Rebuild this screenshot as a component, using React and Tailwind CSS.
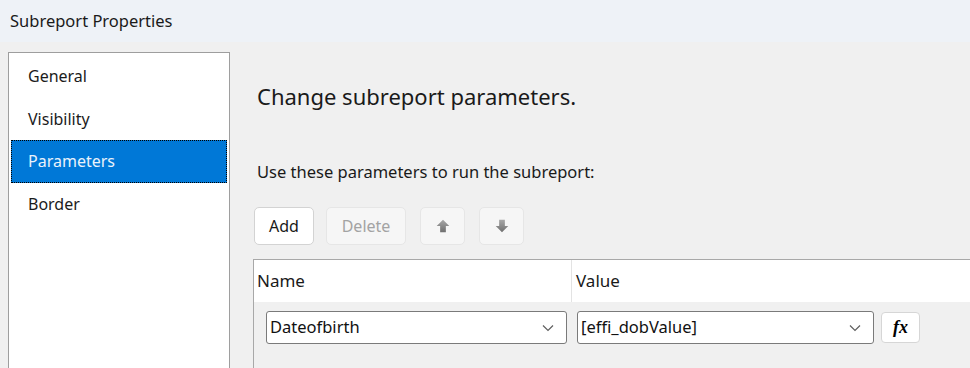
import React from 'react'

const font = { fontFamily: '"Noto Sans", "Open Sans", sans-serif' }

const Chevron = () => (
  <svg width="12" height="8" viewBox="0 0 12 8" className="shrink-0">
    <path d="M1 1.5 L6 6.5 L11 1.5" fill="none" stroke="#5f5f5f" strokeWidth="1.2" />
  </svg>
)

const Arrow = ({ down }) => (
  <svg width="16" height="16" viewBox="0 0 14 14" style={down ? { transform: 'rotate(180deg)' } : undefined}>
    <defs>
      <linearGradient id={down ? 'gd' : 'gu'} x1="0" y1="0" x2="0" y2="1">
        <stop offset="0" stopColor={down ? '#6f6f6f' : '#a8a8a8'} />
        <stop offset="1" stopColor={down ? '#a8a8a8' : '#6f6f6f'} />
      </linearGradient>
    </defs>
    <path d="M7 1.5 L12.5 7 L9.5 7 L9.5 12.5 L4.5 12.5 L4.5 7 L1.5 7 Z" fill={`url(#${down ? 'gd' : 'gu'})`} />
  </svg>
)

const NavItem = ({ label, active }) => (
  <div
    className={`h-[42.5px] flex items-center pl-[17px] text-[16px] ${active ? 'bg-[#0078d7] text-[#eaf2fb] outline-1 outline-dotted outline-black -outline-offset-1' : 'text-[#1b1b1b]'}`}
  >
    {label}
  </div>
)

const Combo = ({ value, width }) => (
  <div className={`${width} h-[33px] bg-white border border-[#7a7a7a] rounded-[3px] flex items-center justify-between pl-[3px] pr-[12px] text-[16.5px] text-[#111]`}>
    <span>{value}</span>
    <Chevron />
  </div>
)

export default function App() {
  return (
    <div className="w-[970px] h-[368px] bg-[#f0f0f0] overflow-hidden flex flex-col" style={font}>
      <div className="h-[42px] shrink-0 bg-[#eef2f7] flex items-center pl-[10px] text-[16.5px] text-[#1a1a1a]">
        Subreport Properties
      </div>

      <div className="flex flex-1 pt-[10px]">
        <div className="ml-[8px] w-[222px] h-[340px] bg-white border border-[#9e9e9e] px-[2px] pt-[2px] shrink-0">
          <NavItem label="General" />
          <NavItem label="Visibility" />
          <NavItem label="Parameters" active />
          <NavItem label="Border" />
        </div>

        <div className="ml-[23px] flex flex-col">
          <div className="mt-[30px] pl-[4px] text-[22px] leading-[29px] text-[#1a1a1a]">Change subreport parameters.</div>
          <div className="mt-[50px] text-[16.5px] leading-[22px] text-[#1a1a1a] pl-[4px]">Use these parameters to run the subreport:</div>

          <div className="mt-[24px] flex items-center gap-[12px] pl-[1px]">
            <div className="w-[60px] h-[38px] bg-white border border-[#d3d3d3] rounded-[5px] flex items-center justify-center text-[16px] text-[#1a1a1a]">Add</div>
            <div className="w-[80px] h-[38px] bg-[#f6f6f6] border border-[#e6e6e6] rounded-[5px] flex items-center justify-center text-[16px] text-[#a3a3a3]">Delete</div>
            <div className="w-[45px] h-[38px] ml-[2px] bg-[#f6f6f6] border border-[#e6e6e6] rounded-[5px] flex items-center justify-center">
              <Arrow />
            </div>
            <div className="w-[45px] h-[38px] ml-[2px] bg-[#f6f6f6] border border-[#e6e6e6] rounded-[5px] flex items-center justify-center">
              <Arrow down />
            </div>
          </div>

          <div className="mt-[14px] w-[740px] h-[120px] border-l border-t border-[#a8a8a8] flex flex-col">
            <div className="h-[42px] bg-white flex text-[17px] text-[#1a1a1a]">
              <div className="w-[318px] flex items-center pl-[3px] border-r border-[#e3e3e3]">Name</div>
              <div className="flex-1 flex items-center pl-[4px]">Value</div>
            </div>
            <div className="flex items-center pt-[9px] pl-[12px]">
              <Combo value="Dateofbirth" width="w-[301px]" />
              <div className="ml-[10px]">
                <Combo value="[effi_dobValue]" width="w-[297px]" />
              </div>
              <div className="ml-[7px] w-[39px] h-[31px] bg-white border border-[#d6d6d6] rounded-[4px] flex items-center justify-center text-[18px] font-bold italic text-black" style={{ fontFamily: '"Liberation Serif", serif' }}>
                fx
              </div>
            </div>
          </div>
        </div>
      </div>
    </div>
  )
}
